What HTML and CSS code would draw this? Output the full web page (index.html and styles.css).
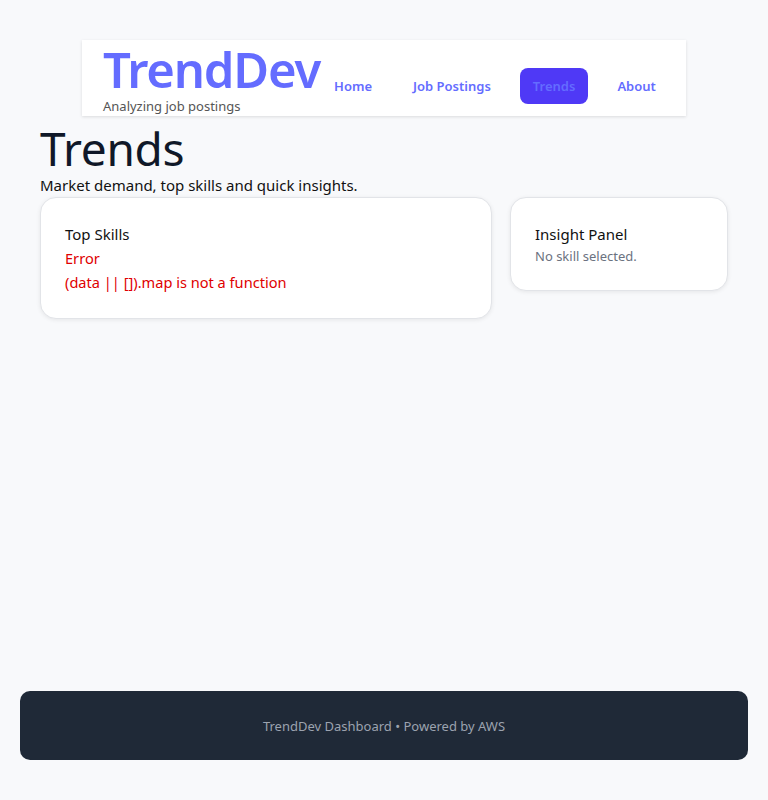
FILE: index.html
```html
<!DOCTYPE html>
<html lang="en">
<head>
<meta charset="utf-8">
<title>TrendDev</title>
<link rel="stylesheet" href="styles.css">
</head>
<body>
<div class="page">
  <header class="topbar">
    <div class="brand">
      <div class="logo">TrendDev</div>
      <div class="tagline">Analyzing job postings</div>
    </div>
    <nav class="nav">
      <a class="nav-link">Home</a>
      <a class="nav-link">Job Postings</a>
      <a class="nav-link active">Trends</a>
      <a class="nav-link">About</a>
    </nav>
  </header>
  <main class="main">
    <h1 class="title">Trends</h1>
    <p class="subtitle">Market demand, top skills and quick insights.</p>
    <div class="grid">
      <section class="card">
        <div class="card-title">Top Skills</div>
        <div class="error">Error</div>
        <div class="error">(data || []).map is not a function</div>
      </section>
      <section class="card card-side">
        <div class="card-title">Insight Panel</div>
        <div class="muted">No skill selected.</div>
      </section>
    </div>
  </main>
  <footer class="footer">TrendDev Dashboard • Powered by AWS</footer>
</div>
</body>
</html>
```

FILE: styles.css
```css
* { box-sizing: border-box; }
html, body { margin: 0; padding: 0; }
body {
  background: #f8f9fb;
  font-family: "Noto Sans", "Open Sans", sans-serif;
  color: #111;
}
.page {
  min-height: 800px;
  display: flex;
  flex-direction: column;
  padding: 40px 20px 40px;
}
.topbar {
  align-self: center;
  width: 604px;
  height: 76px;
  background: #fff;
  box-shadow: 0 1px 3px rgba(0,0,0,0.12);
  display: flex;
  align-items: flex-start;
  padding: 0 0 0 21px;
}
.brand { display: flex; flex-direction: column; flex-shrink: 0; }
.logo {
  font-size: 49px;
  font-weight: 600;
  color: #646cff;
  line-height: 58px;
  letter-spacing: -1.2px;
}
.tagline {
  font-size: 13px;
  color: #555;
  line-height: 16px;
}
.nav {
  display: flex;
  align-items: center;
  gap: 17px;
  margin-top: 28px;
  margin-left: 2px;
}
.nav-link {
  font-size: 13px;
  font-weight: 600;
  color: #646cff;
  padding: 8px 12px;
  border-radius: 8px;
  line-height: 20px;
  white-space: nowrap;
}
.nav-link.active {
  background: #4f39f6;
  padding: 8px 13px;
}
.main { padding: 6px 20px 0; flex: 1; }
.title {
  margin: 0;
  font-size: 46px;
  font-weight: 400;
  line-height: 52px;
  color: #101828;
  letter-spacing: -0.3px;
}
.subtitle {
  margin: 0 0 1px;
  font-size: 15px;
  line-height: 22px;
  color: #111;
}
.grid {
  display: grid;
  grid-template-columns: minmax(0, 1fr) 218px;
  gap: 18px;
  align-items: start;
}
.card {
  background: #fff;
  border: 1px solid #e2e4e8;
  border-radius: 16px;
  box-shadow: 0 1px 4px rgba(0,0,0,0.08);
  padding: 24px 24px;
}
.card-title { font-size: 15px; line-height: 24px; color: #111; }
.error { font-size: 14.6px; line-height: 24px; color: #e00000; }
.muted { font-size: 13px; line-height: 20px; color: #6b7280; }
.footer {
  background: #1f2937;
  border-radius: 10px;
  height: 69px;
  display: flex;
  align-items: center;
  justify-content: center;
  color: #9ca3af;
  font-size: 13px;
}
```
